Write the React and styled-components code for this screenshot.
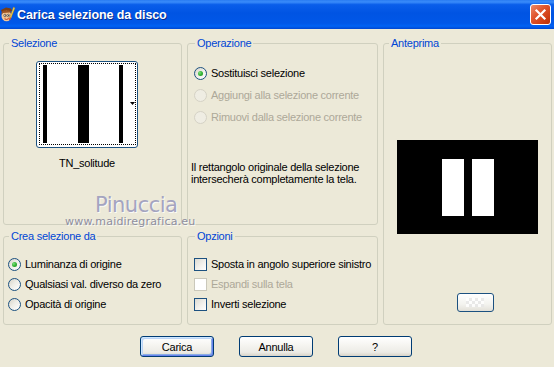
import React from 'react';
import styled, { createGlobalStyle } from 'styled-components';

const GlobalStyle = createGlobalStyle`
  html, body { margin: 0; padding: 0; }
  body {
    background: #ECE9D8;
    font-family: "Liberation Sans", Arial, sans-serif;
    font-size: 11px;
    letter-spacing: -0.25px;
    color: #000;
  }
`;

const Window = styled.div`
  width: 554px;
  height: 367px;
  overflow: hidden;
  background: #ECE9D8;
  display: flex;
  flex-direction: column;
`;

const TitleBar = styled.div`
  height: 29px;
  flex: none;
  display: flex;
  align-items: center;
  padding-right: 3px;
  background: linear-gradient(
    to bottom,
    #2A7CF2 0%,
    #3A8CFA 7%,
    #0A5EEA 16%,
    #0054E3 45%,
    #0057E8 80%,
    #0062F4 90%,
    #0046D0 100%
  );
`;

const TitleIcon = styled.svg`
  flex: none;
  display: block;
`;

const TitleText = styled.span`
  margin-left: 1px;
  color: #fff;
  font-family: "Liberation Sans", Arial, sans-serif;
  font-weight: bold;
  font-size: 12.5px;
  letter-spacing: -0.1px;
  text-shadow: 1px 1px 0 #0A2C8A;
`;

const CloseButton = styled.div`
  margin-left: auto;
  width: 21px;
  height: 21px;
  box-sizing: border-box;
  border: 1px solid #fff;
  border-radius: 3px;
  background: linear-gradient(135deg, #EC8A6A 0%, #E0562E 40%, #CF3E14 75%, #B93009 100%);
  display: flex;
  align-items: center;
  justify-content: center;
`;

const Body = styled.div`
  position: relative;
  padding: 8px 2px 0 3px;
  display: flex;
  flex-direction: column;
`;

const Panels = styled.div`
  display: grid;
  grid-template-columns: 179px 191px 169px;
  grid-template-rows: 188px 95px;
  column-gap: 5px;
  row-gap: 5px;
`;

const Group = styled.fieldset`
  margin: 0;
  padding: 0;
  min-width: 0;
  box-sizing: border-box;
  border: 1px solid #D0D0BF;
  border-radius: 3px;
  display: flex;
  flex-direction: column;
  grid-column: ${(p) => p.$col};
  grid-row: ${(p) => p.$row};
`;

const Legend = styled.legend`
  margin-left: ${(p) => p.$offset ?? 5}px;
  padding: 0 2px;
  color: #0046D5;
  line-height: 13px;
  font-size: 11px;
`;

const SelContent = styled.div`
  padding: 11px 0 0 32px;
  display: flex;
  flex-direction: column;
  align-items: flex-start;
`;

const ThumbCol = styled.div`
  width: 102px;
  display: flex;
  flex-direction: column;
  align-items: center;
`;

const Thumb = styled.div`
  width: 102px;
  height: 87px;
  box-sizing: border-box;
  border: 1px solid #1C5180;
  border-radius: 3px;
  background: #fff;
  padding: 1px 2px;
`;

const FocusRect = styled.div`
  width: 97px;
  height: 82px;
  box-sizing: border-box;
  border: 1px dotted #000;
`;

const Caption = styled.div`
  margin-top: 9px;
  line-height: 13px;
`;

const OpContent = styled.div`
  padding: ${(p) => p.$top}px 0 0 ${(p) => p.$left}px;
  display: flex;
  flex-direction: column;
`;

const OptionList = styled.div`
  display: flex;
  flex-direction: column;
  gap: ${(p) => p.$gap}px;
  margin-left: ${(p) => p.$indent || 0}px;
`;

const OptionRow = styled.div`
  display: flex;
  align-items: center;
  gap: 4px;
  height: 13px;
  line-height: 13px;
  white-space: nowrap;
  color: ${(p) => (p.$disabled ? '#ACA899' : '#000')};
`;

const RadioCircle = styled.span`
  flex: none;
  width: 13px;
  height: 13px;
  box-sizing: border-box;
  border-radius: 50%;
  border: 1px solid ${(p) => (p.$disabled ? '#D5D2C5' : '#1C5180')};
  background: ${(p) =>
    p.$disabled
      ? '#EFEDE3'
      : 'linear-gradient(135deg, #D6D3C8 0%, #EEEDE7 45%, #FFFFFF 100%)'};
  display: flex;
  align-items: center;
  justify-content: center;
`;

const RadioDot = styled.span`
  width: 5px;
  height: 5px;
  border-radius: 50%;
  background: radial-gradient(circle at 35% 35%, #7BE07B 0%, #33B233 50%, #1E8F1E 100%);
`;

const CheckBox = styled.span`
  flex: none;
  width: 13px;
  height: 13px;
  box-sizing: border-box;
  border: 1px solid ${(p) => (p.$disabled ? '#CAC8BB' : '#1C5180')};
  background: ${(p) =>
    p.$disabled ? '#FFFFFF' : 'linear-gradient(135deg, #DCDBD3 0%, #F2F1EC 55%, #FFFFFF 100%)'};
`;

const Description = styled.div`
  margin-top: 37px;
  line-height: 12px;
`;

const PreviewContent = styled.div`
  padding-top: 90px;
  display: flex;
  flex-direction: column;
  align-items: center;
`;

const PreviewCanvas = styled.div`
  width: 141px;
  height: 94px;
  background: #000;
  display: flex;
  align-items: center;
  justify-content: center;
  gap: 8px;
`;

const PreviewBar = styled.div`
  width: 22px;
  height: 57px;
  background: #fff;
`;

const SmallButton = styled.div`
  margin-top: 59px;
  margin-left: 15px;
  width: 37px;
  height: 19px;
  box-sizing: border-box;
  border: 1px solid #1C5180;
  border-radius: 3px;
  background: linear-gradient(to bottom, #FFFFFF 0%, #F3F3EF 60%, #E2E0D8 100%);
  display: flex;
  align-items: center;
  justify-content: center;
`;

const Checker = styled.div`
  width: 18px;
  height: 9px;
  background: repeating-conic-gradient(#E6E6E6 0% 25%, #FFFFFF 0% 50%) 0 0 / 6px 6px;
  opacity: 0.8;
`;

const ButtonRow = styled.div`
  margin-top: 11px;
  padding-right: 3px;
  display: flex;
  justify-content: center;
  gap: 25px;
`;

const Button = styled.button`
  width: 74px;
  height: 21px;
  padding: 0;
  box-sizing: border-box;
  font-family: "Liberation Sans", Arial, sans-serif;
  font-size: 11px;
  letter-spacing: -0.25px;
  color: #000;
  border: 1px solid #003C74;
  border-radius: 3px;
  background: linear-gradient(to bottom, #FFFFFF 0%, #F5F4F0 45%, #ECEBE6 80%, #D8D3C7 100%);
  box-shadow: ${(p) =>
    p.$default
      ? 'inset 1px 1px 0 #CEE7FF, inset -1px -1px 0 #6982EE, inset 2px 2px 0 #BCD4F6, inset -2px -2px 0 #89ADE4'
      : 'none'};
`;

const Watermark = styled.div`
  position: absolute;
  left: ${(p) => p.$x}px;
  top: ${(p) => p.$y}px;
  font-family: "DejaVu Sans", "Liberation Sans", sans-serif;
  font-size: ${(p) => p.$size}px;
  line-height: ${(p) => p.$size}px;
  letter-spacing: ${(p) => p.$spacing}px;
  color: ${(p) => p.$color};
  text-shadow: 1px 1px 0 rgba(255, 255, 255, 0.8);
  white-space: nowrap;
  pointer-events: none;
`;

function Radio({ label, checked, disabled }) {
  return (
    <OptionRow $disabled={disabled}>
      <RadioCircle $disabled={disabled}>{checked && <RadioDot />}</RadioCircle>
      <span>{label}</span>
    </OptionRow>
  );
}

function Check({ label, disabled }) {
  return (
    <OptionRow $disabled={disabled}>
      <CheckBox $disabled={disabled} />
      <span>{label}</span>
    </OptionRow>
  );
}

function AppIcon() {
  return (
    <TitleIcon width="16" height="17" viewBox="0 0 16 17">
      <path d="M1 4 L6 1.5 L11 2.5 L12 5 L8 6 L2 6.5 Z" fill="#7A3E16" />
      <ellipse cx="6.5" cy="10" rx="5" ry="5.2" fill="#F3C796" />
      <path d="M1.5 9 Q1 5 4 4.5 L9 4.5 Q11.5 5.5 11.5 8 L10 6.5 L3 7 Z" fill="#9C5424" />
      <circle cx="5" cy="9.5" r="1.3" fill="#fff" stroke="#3A2A1A" strokeWidth="0.6" />
      <circle cx="8.3" cy="9.5" r="1.3" fill="#fff" stroke="#3A2A1A" strokeWidth="0.6" />
      <circle cx="5.2" cy="9.6" r="0.5" fill="#1A1A1A" />
      <circle cx="8.5" cy="9.6" r="0.5" fill="#1A1A1A" />
      <path d="M4.5 12.8 Q6.5 14.2 8.8 12.6" stroke="#B8321C" strokeWidth="1" fill="none" />
      <path d="M13.5 1 L15 2 L11 12 L9.8 11.3 Z" fill="#F4D24A" stroke="#A0741A" strokeWidth="0.4" />
      <path d="M9.8 11.3 L11 12 L10 14.5 L9 13.5 Z" fill="#D8381E" />
    </TitleIcon>
  );
}

export default function App() {
  return (
    <>
      <GlobalStyle />
      <Window>
        <TitleBar>
          <AppIcon />
          <TitleText>Carica selezione da disco</TitleText>
          <CloseButton>
            <svg width="13" height="13" viewBox="0 0 13 13">
              <path d="M2.5 2.5 L10.5 10.5 M10.5 2.5 L2.5 10.5" stroke="#fff" strokeWidth="2.2" strokeLinecap="square" />
            </svg>
          </CloseButton>
        </TitleBar>
        <Body>
          <Panels>
            <Group $col="1" $row="1">
              <Legend>Selezione</Legend>
              <SelContent>
                <ThumbCol>
                  <Thumb>
                    <FocusRect>
                      <svg width="95" height="80" viewBox="0 0 95 80" style={{ display: 'block' }}>
                        <rect x="3" y="1" width="4" height="78" fill="#000" />
                        <rect x="38" y="1" width="11" height="78" fill="#000" />
                        <rect x="79" y="1" width="4" height="78" fill="#000" />
                        <path d="M90 38 L95 38 L92.5 41 Z" fill="#000" />
                      </svg>
                    </FocusRect>
                  </Thumb>
                  <Caption>TN_solitude</Caption>
                </ThumbCol>
              </SelContent>
            </Group>

            <Group $col="2" $row="1">
              <Legend $offset={7}>Operazione</Legend>
              <OpContent $top={17} $left={3}>
                <OptionList $gap={9} $indent={3}>
                  <Radio label="Sostituisci selezione" checked />
                  <Radio label="Aggiungi alla selezione corrente" disabled />
                  <Radio label="Rimuovi dalla selezione corrente" disabled />
                </OptionList>
                <Description>
                  Il rettangolo originale della selezione
                  <br />
                  intersecherà completamente la tela.
                </Description>
              </OpContent>
            </Group>

            <Group $col="3" $row="1 / span 2">
              <Legend>Anteprima</Legend>
              <PreviewContent>
                <PreviewCanvas>
                  <PreviewBar />
                  <PreviewBar />
                </PreviewCanvas>
                <SmallButton>
                  <Checker />
                </SmallButton>
              </PreviewContent>
            </Group>

            <Group $col="1" $row="2">
              <Legend>Crea selezione da</Legend>
              <OpContent $top={15} $left={4}>
                <OptionList $gap={7}>
                  <Radio label="Luminanza di origine" checked />
                  <Radio label="Qualsiasi val. diverso da zero" />
                  <Radio label="Opacità di origine" />
                </OptionList>
              </OpContent>
            </Group>

            <Group $col="2" $row="2">
              <Legend $offset={7}>Opzioni</Legend>
              <OpContent $top={15} $left={3}>
                <OptionList $gap={7} $indent={3}>
                  <Check label="Sposta in angolo superiore sinistro" />
                  <Check label="Espandi sulla tela" disabled />
                  <Check label="Inverti selezione" />
                </OptionList>
              </OpContent>
            </Group>
          </Panels>

          <ButtonRow>
            <Button $default>Carica</Button>
            <Button>Annulla</Button>
            <Button>?</Button>
          </ButtonRow>

          <Watermark $x={95} $y={166} $size={21} $spacing={-0.5} $color="#A4A4C0">
            Pinuccia
          </Watermark>
          <Watermark $x={65} $y={187} $size={11} $spacing={0.2} $color="#8E8E9E">
            www.maidiregrafica.eu
          </Watermark>
        </Body>
      </Window>
    </>
  );
}
